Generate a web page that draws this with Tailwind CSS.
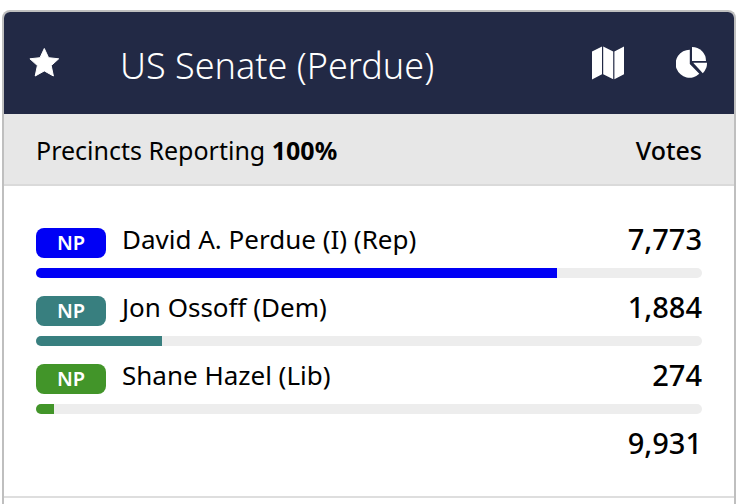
<!DOCTYPE html>
<html lang="en">
<head>
    <meta charset="UTF-8">
    <meta name="viewport" content="width=device-width, initial-scale=1.0">
    <title>US Senate (Perdue) - Election Results</title>
    <!-- Tailwind CSS -->
    <script src="https://cdn.jsdelivr.net/npm/@tailwindcss/browser@4"></script>
</head>
<body class="bg-white font-['Noto_Sans',sans-serif] text-black">
    <main class="flex min-h-screen flex-col px-[2px] pt-[10px]">
        <!-- Contest Card -->
        <section class="flex-1 overflow-hidden rounded-t-lg border-2 border-b-0 border-[#bfbfbf]">
            <!-- Header -->
            <header class="flex h-[102px] items-center bg-[#222945] pr-[26px] pl-6 text-white">
                <button type="button" aria-label="Favorite" class="shrink-0">
                    <svg class="h-8 w-8" viewBox="0 0 32 32" fill="currentColor" stroke="currentColor" stroke-width="1" stroke-linejoin="round">
                        <path d="M16.3 1.5l4.3 9.2 10.1 1.1-7.5 6.8 2.2 10.4-9.1-5.1-9.1 5.1 2.2-10.4L1.9 11.8l10.1-1.1z"/>
                    </svg>
                </button>
                <h1 class="ml-[60px] flex-1 pt-1.5 text-[36px] leading-[48px] font-[350] whitespace-nowrap">US Senate (Perdue)</h1>
                <button type="button" aria-label="Map" class="shrink-0">
                    <svg class="h-[34px] w-8" viewBox="0 0 32 34" fill="currentColor">
                        <path d="M0 5.5L10 .5v27.7L0 33.5zM11.2.5l10 5v27.8l-10-5.1zM22.4 5.5L32 .5v27.7l-9.6 5.1z"/>
                    </svg>
                </button>
                <button type="button" aria-label="Chart" class="ml-[52px] shrink-0">
                    <svg class="h-8 w-8" viewBox="0 0 32 32" fill="currentColor">
                        <path d="M13.8 2.7A14 14 0 1 0 23.3 26.8L13.8 17z"/>
                        <path d="M16 0a14 14 0 0 1 14 14H16z"/>
                        <path d="M17.2 15.8H31a14 14 0 0 1-4.2 10.4z"/>
                    </svg>
                </button>
            </header>

            <!-- Results -->
            <table class="w-full border-collapse border-b-2 border-[#dedede]">
                <thead class="h-[71px] border-b-2 border-[#dadada] bg-[#e7e7e7] text-[25px] leading-8">
                    <tr>
                        <th scope="col" class="pt-[2px] pl-8 text-left font-normal">Precincts Reporting <strong class="font-bold">100%</strong></th>
                        <th scope="col" class="pt-[2px] pr-8 text-right font-medium">Votes</th>
                    </tr>
                </thead>
                <tbody class="align-top text-[26px] leading-[38px]">
                    <tr class="h-[83px]">
                        <td class="pt-[34px] pl-8">
                            <div class="flex items-end gap-4">
                                <span class="w-[70px] rounded-lg bg-[#0000f5] text-center text-[20px] leading-[30px] font-semibold text-white">NP</span>
                                <span>David A. Perdue (I) (Rep)</span>
                            </div>
                        </td>
                        <td class="pt-[34px] pr-8 text-right text-[29px] font-medium">7,773</td>
                    </tr>
                    <tr class="h-5">
                        <td colspan="2" class="px-8">
                            <div class="h-[10px] overflow-hidden rounded-full bg-[#ededed]">
                                <div class="h-full bg-[#0000f5]" style="width: 78.27%"></div>
                            </div>
                        </td>
                    </tr>
                    <tr class="h-12">
                        <td class="pl-8">
                            <div class="flex items-end gap-4">
                                <span class="w-[70px] rounded-lg bg-[#387f7f] text-center text-[20px] leading-[30px] font-semibold text-white">NP</span>
                                <span>Jon Ossoff (Dem)</span>
                            </div>
                        </td>
                        <td class="pr-8 text-right text-[29px] font-medium">1,884</td>
                    </tr>
                    <tr class="h-5">
                        <td colspan="2" class="px-8">
                            <div class="h-[10px] overflow-hidden rounded-full bg-[#ededed]">
                                <div class="h-full bg-[#387f7f]" style="width: 18.97%"></div>
                            </div>
                        </td>
                    </tr>
                    <tr class="h-12">
                        <td class="pl-8">
                            <div class="flex items-end gap-4">
                                <span class="w-[70px] rounded-lg bg-[#429529] text-center text-[20px] leading-[30px] font-semibold text-white">NP</span>
                                <span>Shane Hazel (Lib)</span>
                            </div>
                        </td>
                        <td class="pr-8 text-right text-[29px] font-medium">274</td>
                    </tr>
                    <tr class="h-5">
                        <td colspan="2" class="px-8">
                            <div class="h-[10px] overflow-hidden rounded-full bg-[#ededed]">
                                <div class="h-full bg-[#429529]" style="width: 2.76%"></div>
                            </div>
                        </td>
                    </tr>
                </tbody>
                <tfoot class="align-top text-[29px] leading-[38px]">
                    <tr class="h-[73px]">
                        <td colspan="2" class="pr-8 text-right font-medium">9,931</td>
                    </tr>
                </tfoot>
            </table>
        </section>
    </main>
</body>
</html>
